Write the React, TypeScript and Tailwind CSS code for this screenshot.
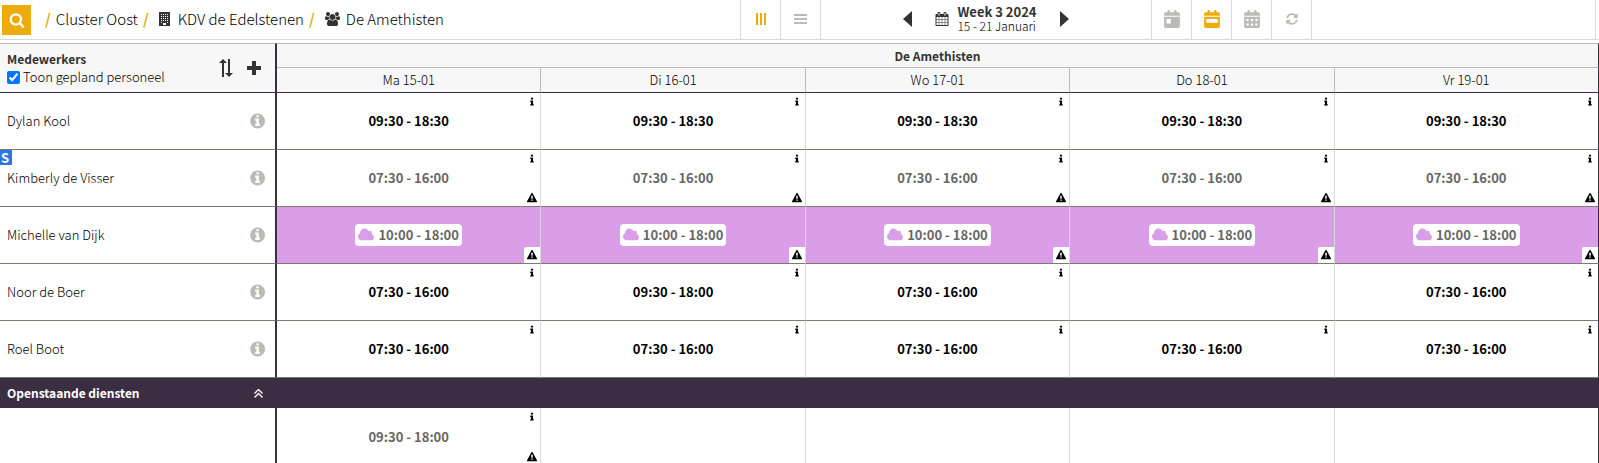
import type { ReactNode } from "react";
import { FaCalendarAlt, FaCalendarDay, FaSyncAlt } from "react-icons/fa";

type IconProps = { d: string; box?: string; className: string };

function Icon({ d, box = "0 0 1792 1792", className }: IconProps) {
  return (
    <svg viewBox={box} className={className} fill="currentColor" aria-hidden="true">
      <path d={d} />
    </svg>
  );
}

const SEARCH =
  "M1216 832q0-185-131.5-316.5t-316.5-131.5-316.5 131.5-131.5 316.5 131.5 316.5 316.5 131.5 316.5-131.5 131.5-316.5zm512 832q0 52-38 90t-90 38q-54 0-90-38l-343-342q-179 124-399 124-143 0-273.5-55.5t-225-150-150-225-55.5-273.5 55.5-273.5 150-225 225-150 273.5-55.5 273.5 55.5 225 150 150 225 55.5 273.5q0 220-124 399l343 343q37 37 37 90z";
const CALENDAR =
  "M192 1664h288v-288h-288v288zm352 0h320v-288h-320v288zm-352-352h288v-320h-288v320zm352 0h320v-320h-320v320zm-352-384h288v-288h-288v288zm736 736h320v-288h-320v288zm-384-736h320v-288h-320v288zm768 736h288v-288h-288v288zm-384-352h320v-320h-320v320zm-352-864v-288q0-13-9.5-22.5t-22.5-9.5h-64q-13 0-22.5 9.5t-9.5 22.5v288q0 13 9.5 22.5t22.5 9.5h64q13 0 22.5-9.5t9.5-22.5zm736 864h288v-320h-288v320zm-384-384h320v-288h-320v288zm384 0h288v-288h-288v288zm32-480v-288q0-13-9.5-22.5t-22.5-9.5h-64q-13 0-22.5 9.5t-9.5 22.5v288q0 13 9.5 22.5t22.5 9.5h64q13 0 22.5-9.5t9.5-22.5zm384-64v1280q0 52-38 90t-90 38h-1408q-52 0-90-38t-38-90v-1280q0-52 38-90t90-38h128v-96q0-66 47-113t113-47h64q66 0 113 47t47 113v96h384v-96q0-66 47-113t113-47h64q66 0 113 47t47 113v96h128q52 0 90 38t38 90z";
const USERS =
  "M593 896q-162 5-265 128h-134q-82 0-138-40.5t-56-118.5q0-353 124-353 6 0 43.5 21t97.5 42.5 119 21.5q67 0 133-23-5 37-5 66 0 139 81 256zm1071 637q0 120-73 189.5t-194 69.5h-874q-121 0-194-69.5t-73-189.5q0-53 3.5-103.5t14-109 26.5-108.5 43-97.5 62-81 85.5-53.5 111.500-20q10 0 43 21.5t73 48 107 48 135 21.5 135-21.5 107-48 73-48 43-21.5q61 0 111.500 20t85.5 53.5 62 81 43 97.5 26.5 108.500 14 109 3.500 103.500zm-1024-1277q0 106-75 181t-181 75-181-75-75-181 75-181 181-75 181 75 75 181zm704 384q0 159-112.500 271.500t-271.500 112.500-271.500-112.500-112.500-271.500 112.500-271.500 271.500-112.500 271.500 112.500 112.500 271.500zm576 225q0 78-56 118.500t-138 40.500h-134q-103-123-265-128 81-117 81-256 0-29-5-66 66 23 133 23 59 0 119-21.500t97.500-42.500 43.500-21q124 0 124 353zm-128-609q0 106-75 181t-181 75-181-75-75-181 75-181 181-75 181 75 75 181z";
const INFO_CIRCLE =
  "M1152 1376v-160q0-14-9-23t-23-9h-96v-512q0-14-9-23t-23-9h-320q-14 0-23 9t-9 23v160q0 14 9 23t23 9h96v320h-96q-14 0-23 9t-9 23v160q0 14 9 23t23 9h448q14 0 23-9t9-23zm-128-896v-160q0-14-9-23t-23-9h-192q-14 0-23 9t-9 23v160q0 14 9 23t23 9h192q14 0 23-9t9-23zm640 416q0 209-103 385.5t-279.5 279.5-385.5 103-385.5-103-279.5-279.5-103-385.5 103-385.5 279.5-279.5 385.5-103 385.5 103 279.5 279.5 103 385.5z";
const INFO =
  "M1216 1344v128q0 26-19 45t-45 19h-512q-26 0-45-19t-19-45v-128q0-26 19-45t45-19h64v-384h-64q-26 0-45-19t-19-45v-128q0-26 19-45t45-19h384q26 0 45 19t19 45v576h64q26 0 45 19t19 45zm-128-1152v192q0 26-19 45t-45 19h-256q-26 0-45-19t-19-45v-192q0-26 19-45t45-19h256q26 0 45 19t19 45z";
const WARNING =
  "M1024 1375v-190q0-14-9.5-23.5t-22.5-9.5h-192q-13 0-22.5 9.5t-9.5 23.5v190q0 14 9.5 23.5t22.5 9.5h192q13 0 22.5-9.5t9.5-23.5zm-2-374l18-459q0-12-10-19-13-11-24-11h-220q-11 0-24 11-10 7-10 21l17 457q0 10 10 16.5t24 6.5h185q14 0 23.5-6.5t10.5-16.5zm-14-934l768 1408q35 63-2 126-17 29-46.5 46t-63.5 17h-1536q-34 0-63.5-17t-46.5-46q-37-63-2-126l768-1408q17-31 47-49t65-18 65 18 47 49z";
const CLOUD =
  "M1920 1152q0 159-112.5 271.5t-271.5 112.5h-1088q-185 0-316.5-131.5t-131.5-316.5q0-132 71-241.5t187-163.5q-2-28-2-43 0-212 150-362t362-150q158 0 286.5 88t187.5 230q70-62 166-62 106 0 181 75t75 181q0 75-41 138 129 30 213 134.5t84 239.5z";
const BUILDING =
  "M0 0h11v14H0zM2 2v1h1V2zM4 2v1h1V2zM6 2v1h1V2zM8 2v1h1V2zM2 4v1h1V4zM4 4v1h1V4zM6 4v1h1V4zM8 4v1h1V4zM2 6v1h1V6zM4 6v1h1V6zM6 6v1h1V6zM8 6v1h1V6zM2 8v1h1V8zM4 8v1h1V8zM6 8v1h1V8zM8 8v1h1V8zM2 10v1h1v-1zM8 10v1h1v-1zM4 11v2h3v-2z";
const CALENDAR_WEEK =
  "M0 464c0 26.500 21.500 48 48 48h352c26.500 0 48-21.500 48-48V192H0zm64-192c0-8.800 7.200-16 16-16h288c8.800 0 16 7.200 16 16v64c0 8.800-7.200 16-16 16H80c-8.800 0-16-7.200-16-16zM400 64h-48V16c0-8.800-7.200-16-16-16h-32c-8.800 0-16 7.200-16 16v48H160V16c0-8.800-7.200-16-16-16h-32c-8.800 0-16 7.200-16 16v48H48C21.500 64 0 85.500 0 112v48h448v-48c0-26.500-21.500-48-48-48z";
const CALENDAR_WEEK_HOLE = "M80 256h288q16 0 16 16v64q0 16-16 16H80q-16 0-16-16v-64q0-16 16-16z";

type Shift = { time: string; kind: "fixed" | "open" | "leave"; info?: boolean; warn?: boolean } | null;

const fixed = (time: string): Shift => ({ time, kind: "fixed", info: true });
const open = (time: string): Shift => ({ time, kind: "open", info: true, warn: true });
const leave = (time: string): Shift => ({ time, kind: "leave", warn: true });

const days = ["Ma 15-01", "Di 16-01", "Wo 17-01", "Do 18-01", "Vr 19-01"];

const staff: { name: string; badge?: string; shifts: Shift[] }[] = [
  { name: "Dylan Kool", shifts: days.map(() => fixed("09:30 - 18:30")) },
  { name: "Kimberly de Visser", badge: "S", shifts: days.map(() => open("07:30 - 16:00")) },
  { name: "Michelle van Dijk", shifts: days.map(() => leave("10:00 - 18:00")) },
  {
    name: "Noor de Boer",
    shifts: [fixed("07:30 - 16:00"), fixed("09:30 - 18:00"), fixed("07:30 - 16:00"), null, fixed("07:30 - 16:00")],
  },
  { name: "Roel Boot", shifts: days.map(() => fixed("07:30 - 16:00")) },
];

const openShifts: Shift[] = [open("09:30 - 18:00"), null, null, null, null];

function ShiftCell({ shift, line }: { shift: Shift; line: string }) {
  const isLeave = shift?.kind === "leave";
  return (
    <td
      className={`relative h-[57px] border-r border-r-[#d9d9d9] p-0 text-center font-bold last:border-r-[#3b2e42] ${line} ${isLeave ? "bg-[#da9de8]" : ""}`}
    >
      {shift && (
        <>
          {isLeave ? (
            <span className="inline-flex h-[22px] items-center gap-1 rounded bg-white px-[3px] align-middle text-[#666]">
              <Icon d={CLOUD} box="0 0 1920 1792" className="h-4 w-4 text-[#da9de8]" />
              {shift.time}
            </span>
          ) : (
            <span className={shift.kind === "fixed" ? "text-black" : "text-[#666]"}>{shift.time}</span>
          )}
          {shift.info && <Icon d={INFO} className="absolute top-1 right-[3px] h-[10px] w-[10px] text-black" />}
          {shift.warn && (
            <span className="absolute right-0 bottom-0 flex h-4 w-4 items-center justify-center rounded-tl-xs bg-white text-black">
              <Icon d={WARNING} className="h-[10px] w-[10px]" />
            </span>
          )}
        </>
      )}
    </td>
  );
}

function ToolButton({ label, active, children }: { label: string; active?: boolean; children: ReactNode }) {
  return (
    <button
      type="button"
      aria-label={label}
      className={`flex w-10 items-center justify-center border-r border-[#d9d9d9] pb-px ${active ? "text-[#eeab0c]" : "text-[#bbbbb5]"}`}
    >
      {children}
    </button>
  );
}

export default function App() {
  return (
    <div className="h-screen overflow-hidden bg-white font-['Noto_Sans_CJK_SC',sans-serif] text-[13px] leading-5 font-light text-black">
      <header className="flex h-10 border-b border-[#d9d9d9]">
        <div className="flex flex-1 items-center pl-[2px]">
          <button type="button" aria-label="Zoeken" className="flex h-[30px] w-[29px] items-center justify-center bg-[#eeab0c] text-white">
            <Icon d={SEARCH} className="h-4 w-4" />
          </button>
          <nav className="ml-[14px] flex items-center pb-px text-[15px]">
            <span className="font-bold text-[#eeab0c]">/</span>
            <a href="#cluster" className="mx-[5px]">Cluster Oost</a>
            <span className="font-bold text-[#eeab0c]">/</span>
            <a href="#kdv" className="mr-[5px] ml-[10px] flex items-center gap-2">
              <Icon d={BUILDING} box="0 0 11 14" className="h-[14px] w-[11px] text-[#333]" />
              KDV de Edelstenen
            </a>
            <span className="font-bold text-[#eeab0c]">/</span>
            <a href="#groep" className="ml-[10px] flex items-center gap-[6px]">
              <Icon d={USERS} box="0 0 1920 1792" className="h-[14px] w-[15px] text-[#333]" />
              De Amethisten
            </a>
          </nav>
        </div>
        <div className="flex border-l border-[#d9d9d9]">
          <ToolButton label="Kolommen" active>
            <svg viewBox="0 0 12 12" className="h-3 w-3" fill="currentColor"><path d="M1 0h2v12H1zM5 0h2v12H5zM9 0h2v12H9z" /></svg>
          </ToolButton>
          <ToolButton label="Rijen">
            <svg viewBox="0 0 14 12" className="h-3 w-[14px]" fill="currentColor"><path d="M0 1h13v2H0zM0 5h13v2H0zM0 9h13v2H0z" /></svg>
          </ToolButton>
        </div>
        <div className="flex w-[330px] items-center justify-center pb-px">
          <button type="button" aria-label="Vorige week" className="text-[#333]">
            <svg viewBox="0 0 9 16" className="h-4 w-[9px]" fill="currentColor"><path d="M9 0v16L0 8z" /></svg>
          </button>
          <button type="button" className="mr-[23px] ml-[23px] flex items-center gap-2 text-left">
            <Icon d={CALENDAR} className="h-[14px] w-[14px] text-[#333]" />
            <span className="flex flex-col text-[12px] leading-[14px]">
              <strong className="text-[13px] font-bold text-[#333]">Week 3 2024</strong>
              <span>15 - 21 Januari</span>
            </span>
          </button>
          <button type="button" aria-label="Volgende week" className="text-[#333]">
            <svg viewBox="0 0 9 16" className="h-4 w-[9px]" fill="currentColor"><path d="M0 0v16l9-8z" /></svg>
          </button>
        </div>
        <div className="flex border-l border-[#d9d9d9]">
          <ToolButton label="Dag"><FaCalendarDay className="h-[18px] w-4" /></ToolButton>
          <ToolButton label="Week" active>
            <svg viewBox="0 0 448 512" className="h-[18px] w-4" fill="currentColor" aria-hidden="true">
              <path d={CALENDAR_WEEK} />
              <path d={CALENDAR_WEEK_HOLE} fill="#fff" />
            </svg>
          </ToolButton>
          <ToolButton label="Maand"><FaCalendarAlt className="h-[18px] w-4" /></ToolButton>
          <ToolButton label="Vernieuwen"><FaSyncAlt className="h-3 w-3" /></ToolButton>
        </div>
        <div className="mr-[3px] w-[284px] border-r border-[#d9d9d9]" />
      </header>

      <table className="mt-[3px] w-full table-fixed border-separate border-spacing-0">
        <colgroup>
          <col className="w-[277px]" />
          {days.map((d) => <col key={d} />)}
        </colgroup>
        <thead className="bg-[#f7f7f7]">
          <tr>
            <th rowSpan={2} className="border-t border-r-2 border-b border-t-[#bbbbb5] border-r-[#3b2e42] border-b-[#3b2e42] p-0 text-left font-light">
              <div className="flex items-center justify-between pr-[14px] pl-[7px]">
                <div>
                  <div className="text-[12px] leading-[18px] font-bold text-[#333]">Medewerkers</div>
                  <label className="flex items-center gap-[3px] leading-[18px]">
                    <input type="checkbox" defaultChecked className="h-[13px] w-[13px] accent-[#0075ff]" />
                    Toon gepland personeel
                  </label>
                </div>
                <div className="flex items-center gap-[14px] text-[#333]">
                  <button type="button" aria-label="Sorteren">
                    <svg viewBox="0 0 14 18" className="h-[18px] w-[14px]" fill="currentColor"><path d="M3 18V4H0l4-4 4 4H5v14zM9 0h2v14h3l-4 4-4-4h3z" /></svg>
                  </button>
                  <button type="button" aria-label="Toevoegen" className="pb-px">
                    <svg viewBox="0 0 14 14" className="h-[14px] w-[14px]" fill="currentColor"><path d="M5 0h4v5h5v4H9v5H5V9H0V5h5z" /></svg>
                  </button>
                </div>
              </div>
            </th>
            <th colSpan={5} className="h-[25px] border-t border-r border-b border-[#bbbbb5] border-r-[#3b2e42] p-0 text-[12px] leading-[22px] font-bold text-[#333]">De Amethisten</th>
          </tr>
          <tr>
            {days.map((d) => (
              <th key={d} className="h-[25px] border-r border-b border-r-[#bbbbb5] border-b-[#3b2e42] p-0 font-light last:border-r-[#3b2e42]">{d}</th>
            ))}
          </tr>
        </thead>
        <tbody>
          {staff.map((s) => (
            <tr key={s.name}>
              <th className="relative border-r-2 border-b border-r-[#3b2e42] border-b-[#7b7b6f] p-0 text-left font-light">
                {s.badge && <span className="absolute top-0 left-0 flex h-[15px] w-3 items-center bg-[#2b78e4] pl-px text-[13px] font-bold text-white">{s.badge}</span>}
                <div className="flex items-center justify-between pr-[10px] pl-[7px]">
                  {s.name}
                  <button type="button" aria-label={`Info ${s.name}`} className="text-[#bbbbb5]">
                    <Icon d={INFO_CIRCLE} box="0 0 1664 1792" className="h-[18px] w-4" />
                  </button>
                </div>
              </th>
              {s.shifts.map((shift, i) => <ShiftCell key={days[i]} shift={shift} line="border-b border-b-[#7b7b6f]" />)}
            </tr>
          ))}
          <tr className="bg-[#3b2e42] text-white">
            <th colSpan={6} className="h-[30px] p-0 text-left text-[12px] font-bold">
              <div className="flex w-[275px] items-center justify-between pr-3 pl-[7px]">
                Openstaande diensten
                <button type="button" aria-label="Inklappen">
                  <svg viewBox="0 0 9 9" className="h-[9px] w-[9px]" fill="none" stroke="currentColor" strokeWidth="1.3"><path d="M.5 4.500l4-4 4 4M.5 8.500l4-4 4 4" /></svg>
                </button>
              </div>
            </th>
          </tr>
          <tr>
            <td className="border-r-2 border-[#3b2e42] p-0" />
            {openShifts.map((shift, i) => <ShiftCell key={days[i]} shift={shift} line="" />)}
          </tr>
        </tbody>
      </table>
    </div>
  );
}
